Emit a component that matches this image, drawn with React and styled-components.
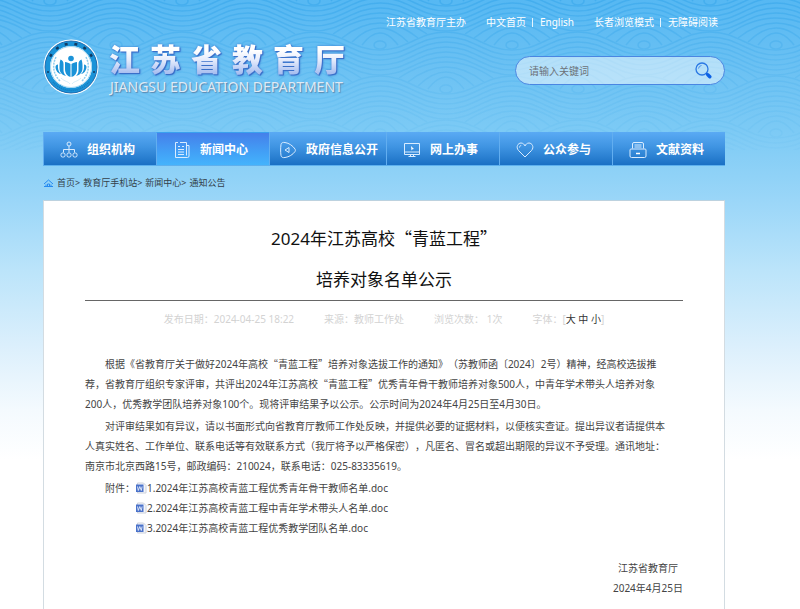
import React from "react";
import styled, { createGlobalStyle, css } from "styled-components";

const CJK = '"Noto Sans CJK SC", sans-serif';
const SANS = `"Noto Sans", ${CJK}`;

const GlobalStyle = createGlobalStyle`
  * { box-sizing: border-box; }
  body {
    margin: 0;
    background: #fff;
    color: #444;
    font: 10px/20px ${SANS};
    text-spacing-trim: space-all;
  }
  a { color: inherit; text-decoration: none; }
  p, h1, h2, ul, ol { margin: 0; padding: 0; list-style: none; }
`;

const Page = styled.div`
  position: relative;
  z-index: 0;
  display: flex;
  flex-direction: column;
  min-height: 100vh;
  padding: 0 75px 0 43px;
  background: linear-gradient(
    #56b8f3 0,
    #69c0f3 60px,
    #7ccaf5 130px,
    #9ad6f8 200px,
    #bbe4fa 270px,
    #dbeffc 345px,
    #f4fafe 410px,
    #fff 460px
  );
`;

const WaveArt = styled.svg`
  position: absolute;
  inset: 0 0 auto 0;
  z-index: -1;
  width: 100%;
  height: 150px;
`;

const TopBar = styled.nav`
  display: flex;
  justify-content: flex-end;
  gap: 20px;
  padding: 12px 7px 0 0;
  color: #fff;
`;

const LinkPair = styled.div`
  display: flex;
  align-items: center;
`;

const Divider = styled.span`
  width: 1px;
  height: 9px;
  margin: 0 7px 0 6px;
  background: #e4f4ff;
`;

const Header = styled.header`
  display: flex;
  justify-content: space-between;
  align-items: flex-start;
  height: 100px;
  padding-top: 7px;
`;

const Brand = styled.a`
  display: flex;
  gap: 10px;
`;

const SiteName = styled.h1`
  display: flex;
  gap: 10px;
  font: 900 31px/38px ${CJK};
  filter: drop-shadow(1px 1px 0 #3a6fc9) drop-shadow(0 0 1px #3a78cf);
`;

const Glyph = styled.span`
  width: 31px;
  color: transparent;
  background: linear-gradient(#fff 30%, #e6ecfc 55%, #a9bff0 90%);
  background-clip: text;
`;

const SiteNameEn = styled.p`
  padding-left: 1px;
  font: 14px/19px ${SANS};
  color: #dfeaf5;
  white-space: nowrap;
  text-shadow: 1px 1px 1px #5a86ac;
`;

const SearchBox = styled.form`
  display: flex;
  align-items: center;
  width: 210px;
  height: 29px;
  margin-top: 17px;
  padding: 0 12px 0 13px;
  border: 1px solid #4a86e2;
  border-radius: 15px;
  background: rgba(255, 255, 255, 0.5);
`;

const SearchInput = styled.input`
  flex: 1;
  min-width: 0;
  padding: 0;
  border: 0;
  outline: 0;
  background: none;
  color: #444;
  font: 10px/20px ${SANS};
  &::placeholder { color: #6c7278; opacity: 1; }
`;

const SearchButton = styled.button`
  display: flex;
  padding: 0;
  border: 0;
  background: none;
  cursor: pointer;
`;

const MainNav = styled.nav`
  display: grid;
  grid-template-columns: 113fr 113fr 117fr 113fr 113fr 113fr;
  height: 34px;
  border-bottom: 1px solid #5db0ee;
`;

const NavItem = styled.a`
  display: flex;
  align-items: center;
  gap: 9px;
  padding: 2px 0 0 ${(p) => (p.$wide ? 9 : 16)}px;
  border-left: 1px solid #62aef0;
  background: linear-gradient(#5aaaf4, #3f94e2 45%, #1a70c4);
  color: #fff;
  font-size: 12px;
  font-weight: 700;
  white-space: nowrap;
  ${(p) =>
    p.$active &&
    css`
      border-top: 1px solid #39a0f0;
      background: linear-gradient(#4580ea, #42a0f6 60%, #44b3fc);
    `}
`;

const Breadcrumb = styled.nav`
  display: flex;
  align-items: center;
  gap: 3px;
  height: 34px;
  color: #333f4a;
  font-size: 9px;
  white-space: nowrap;
`;

const Card = styled.main`
  flex: 1;
  padding: 16px 41px 10px;
  border: 1px solid #d3dce2;
  border-top-color: #bdd2df;
  border-bottom: 0;
  background: #fff;
`;

const Title = styled.h2`
  border-bottom: 1px solid #666;
  color: #111;
  font-size: 17px;
  font-weight: 400;
  line-height: 41px;
  text-align: center;
`;

const Meta = styled.div`
  display: flex;
  justify-content: center;
  gap: 30px;
  padding: 8px 0 25px;
  color: #d3d3d3;
  white-space: nowrap;
`;

const SizeButton = styled.button`
  padding: 0;
  border: 0;
  background: none;
  color: #333;
  font: inherit;
  cursor: pointer;
`;

const Paragraph = styled.p`
  margin-bottom: 2px;
  text-indent: 2em;
`;

const Attachments = styled.div`
  display: flex;
  padding-left: 20px;
`;

const FileLink = styled.a`
  display: flex;
  align-items: center;
`;

const Signature = styled.div`
  width: max-content;
  margin: 20px 0 0 auto;
  text-align: center;
`;

const QuoteMark = styled.span`
  font-family: ${CJK};
`;

const Cn = ({ children }) =>
  children
    .split(/([“”])/)
    .map((part, i) => (i % 2 ? <QuoteMark key={i}>{part}</QuoteMark> : part));

const wave = (px, py) => {
  let d = `M${px - 264} ${py}`;
  for (let x = px - 264; x < px + 264; x += 132) {
    d += `C${x + 28} ${py} ${x + 38} ${py + 18} ${x + 66} ${py + 18}`;
    d += `S${x + 104} ${py} ${x + 132} ${py}`;
  }
  return d;
};

const WaveRow = ({ x, y }) => (
  <>
    {[0, 5, 10, 15, 20, 25].map((dy) => (
      <path key={dy} d={wave(x, y + dy)} />
    ))}
    {[-132, 0, 132].map((dx) => (
      <g key={dx}>
        {[[47, 30, 46], [38, 35, 50], [28, 40, 54], [18, 45, 57]].map(([w, top, base]) => (
          <path
            key={w}
            d={`M${x + dx - w} ${y + base}Q${x + dx} ${y + 2 * top - base} ${x + dx + w} ${y + base}`}
          />
        ))}
        <ellipse cx={x + dx} cy={y + 57} rx="6" ry="4" />
      </g>
    ))}
  </>
);

const Waves = () => (
  <WaveArt aria-hidden="true">
    <defs>
      <pattern id="sea" width="132" height="88" patternUnits="userSpaceOnUse">
        <g fill="none" stroke="#249ce6" strokeWidth="1.5">
          <WaveRow x={50} y={-56} />
          <WaveRow x={116} y={-12} />
          <WaveRow x={50} y={32} />
          <WaveRow x={116} y={76} />
        </g>
      </pattern>
      <linearGradient id="fade" x2="0" y2="1">
        <stop offset="0" stopColor="#fff" stopOpacity=".36" />
        <stop offset=".4" stopColor="#fff" stopOpacity=".17" />
        <stop offset="1" stopColor="#fff" stopOpacity="0.04" />
      </linearGradient>
      <mask id="fadeMask">
        <rect width="100%" height="100%" fill="url(#fade)" />
      </mask>
    </defs>
    <rect width="100%" height="100%" fill="url(#sea)" mask="url(#fadeMask)" />
  </WaveArt>
);

const Emblem = () => (
  <svg width="56" height="56" viewBox="0 0 56 56" aria-hidden="true">
    <circle cx="28" cy="28" r="27.5" fill="#fff" />
    <circle cx="28" cy="28" r="23.5" fill="none" stroke="#1a93d8" strokeWidth="5" />
    <circle cx="28" cy="28" r="26" fill="none" stroke="#1f6cb0" strokeWidth="1" />
    <circle cx="28" cy="28" r="20.5" fill="none" stroke="#a4d8f2" strokeWidth="1" />
    <g fill="#123a60">
      {[-60, -36, -12, 12, 36, 60].map((a) => (
        <rect key={a} x="26.5" y="3.500" width="3" height="2.500" transform={`rotate(${a} 28 28)`} />
      ))}
      <circle cx="5" cy="33" r="1" />
      <circle cx="51" cy="33" r="1" />
    </g>
    <path d="M10 43a23.500 23.500 0 0 0 36 0" fill="none" stroke="#1478bb" strokeWidth="1.500" strokeDasharray="1 1" />
    <g fill="none" stroke="#8fcdee" strokeWidth="1.500" strokeDasharray="2 1">
      <path d="M13 18c-4 8-3 17 4 24" />
      <path d="M43 18c4 8 3 17-4 24" />
    </g>
    <g fill="#1b93d8">
      <circle cx="28" cy="19.500" r="2.800" />
      <path d="M27.500 25v13c-3.500-1-5.500-4-5.500-8v-7c2 0 4 1 5.500 2zM28.500 25v13c3.500-1 5.500-4 5.500-8v-7c-2 0-4 1-5.500 2z" />
      <path d="M17.500 20.500c2 1 3 2 3 4.500v6c0 2 .5 4 2.500 6-4-1-6.500-3.500-6.500-8 0-3 0-6 1-8.500zM38.500 20.500c-2 1-3 2-3 4.500v6c0 2-.5 4-2.500 6 4-1 6.500-3.500 6.500-8 0-3 0-6-1-8.500z" />
      <path d="M15 25.500c-.5 4 .5 7.500 3 9.500-3 0-5.500-4-5.500-7 0-1.500 1-2.500 2.500-2.500zM41 25.500c.5 4-.5 7.500-3 9.500 3 0 5.500-4 5.500-7 0-1.500-1-2.500-2.500-2.500z" />
    </g>
    <path d="M18 39c4 4 7 3 9 6M38 39c-4 4-7 3-9 6" fill="none" stroke="#d4edf9" strokeWidth="1" />
  </svg>
);

const Magnifier = () => (
  <svg width="17" height="17" viewBox="0 0 17 17" fill="none" aria-hidden="true">
    <circle cx="7" cy="7" r="6" stroke="#2a78e4" strokeWidth="1.3" />
    <path d="M3.500 6.500a3.500 3.500 0 0 1 3-3" stroke="#4b91ea" />
    <path d="M11.300 11.300l1.300 1.300" stroke="#1768dc" strokeWidth="1.5" />
    <path d="M12.800 12.800l2 2" stroke="#0a60e6" strokeWidth="3.400" strokeLinecap="round" />
  </svg>
);

const NavSvg = styled.svg`
  flex: none;
  width: 18px;
  height: 18px;
  fill: none;
  stroke: #d9ecff;
  stroke-width: 1;
`;

const icons = {
  org: (
    <>
      <circle cx="9" cy="3" r="2" />
      <path d="M9 5v6.500M3.500 11.500v-3h11v3" />
      <rect x="1" y="12" width="4" height="4" rx="1.500" />
      <rect x="7" y="12" width="4" height="4" rx="1.500" />
      <rect x="13" y="12" width="4" height="4" rx="1.500" />
    </>
  ),
  news: (
    <>
      <path d="M5 1.500H2.500v15h12a1.500 1.500 0 0 0 1.500-1.500V4.500h-2.500M7 1.500h6.500v13" />
      <path d="M5 5.500h2M5 8.500h6M5 11h6M5 13.500h6M9 5.500h2" />
    </>
  ),
  info: (
    <>
      <path d="M2 3.500C2 2 4 1 6 1.500c4 .5 8 3.500 10 6.500.5 1 .5 1.500 0 2.500-2 3-6 5.500-10 6-2 .5-4-.5-4-2C1.500 11 1.500 7 2 3.500z" />
      <path d="M10 6.500v5L6 9z" />
    </>
  ),
  online: (
    <>
      <path d="M1.500 2.500h15v11h-15zM1.500 11h15M7.500 13.500v2M10.500 13.500v2M5.500 15.500h7" />
      <path d="M8 5l3 3-1.500.2-1 1.300z" fill="#fff" stroke="none" />
    </>
  ),
  heart: (
    <>
      <path d="M9 16L2.500 9.500C-.5 6 2 2 5 2c2 0 3.500 1.500 4 3 .5-1.500 2-3 4-3 3 0 5.500 4 2.500 7.500z" />
      <path d="M3.500 6.500c0-1 .7-2 1.700-2" />
    </>
  ),
  files: (
    <>
      <path d="M3.500 7.500V3a1.500 1.500 0 0 1 1.500-1.500h8A1.500 1.500 0 0 1 14.500 3v4.500" />
      <path d="M5.500 4h7M5.500 6h7M2 8h14a1 1 0 0 1 1 1v6a1.500 1.500 0 0 1-1.500 1.500h-13A1.500 1.500 0 0 1 1 15V9a1 1 0 0 1 1-1z" />
      <path d="M7 12.500h4" stroke="#fff" strokeWidth="1.500" />
    </>
  ),
};

const HouseIcon = () => (
  <svg width="11" height="10" viewBox="0 0 11 10" fill="none" stroke="#268af0" aria-hidden="true">
    <path d="M1 6l4.500-4L10 6M3 6.500V8M8 6.500V8M4.500 8V6h2v2M1 8.500h9" />
  </svg>
);

const DocIcon = () => (
  <svg width="12" height="12" viewBox="0 0 12 12" aria-hidden="true">
    <path d="M2.500 1h6L11 3.500V11H2.500z" fill="#f4f6fa" stroke="#cdd1db" />
    <rect x="1" y="2.500" width="7.500" height="7.500" fill="#4a72ca" />
    <path d="M2.500 4.500l.8 4 1.500-4 1.500 4 .8-4" fill="none" stroke="#e6edfa" strokeWidth=".9" />
  </svg>
);

const navItems = [
  { icon: "org", label: "组织机构" },
  { icon: "news", label: "新闻中心", active: true },
  { icon: "info", label: "政府信息公开", wide: true },
  { icon: "online", label: "网上办事" },
  { icon: "heart", label: "公众参与" },
  { icon: "files", label: "文献资料" },
];

const crumbs = ["首页", "教育厅手机站", "新闻中心", "通知公告"];

const files = [
  "1.2024年江苏高校青蓝工程优秀青年骨干教师名单.doc",
  "2.2024年江苏高校青蓝工程中青年学术带头人名单.doc",
  "3.2024年江苏高校青蓝工程优秀教学团队名单.doc",
];

const paragraphs = [
  [
    "根据《省教育厅关于做好2024年高校“青蓝工程”培养对象选拔工作的通知》（苏教师函〔2024〕2号）精神，经高校选拔推",
    "荐，省教育厅组织专家评审，共评出2024年江苏高校“青蓝工程”优秀青年骨干教师培养对象500人，中青年学术带头人培养对象",
    "200人，优秀教学团队培养对象100个。现将评审结果予以公示。公示时间为2024年4月25日至4月30日。",
  ],
  [
    "对评审结果如有异议，请以书面形式向省教育厅教师工作处反映，并提供必要的证据材料，以便核实查证。提出异议者请提供本",
    "人真实姓名、工作单位、联系电话等有效联系方式（我厅将予以严格保密），凡匿名、冒名或超出期限的异议不予受理。通讯地址：",
    "南京市北京西路15号，邮政编码：210024，联系电话：025-83335619。",
  ],
];

export default function App() {
  return (
    <Page>
      <GlobalStyle />
      <Waves />
      <TopBar aria-label="网站链接">
        <span>江苏省教育厅主办</span>
        <LinkPair>
          <a href="#cn">中文首页</a>
          <Divider />
          <a href="#en">English</a>
        </LinkPair>
        <LinkPair>
          <a href="#elder">长者浏览模式</a>
          <Divider />
          <a href="#access">无障碍阅读</a>
        </LinkPair>
      </TopBar>

      <Header>
        <Brand href="#home">
          <Emblem />
          <div>
            <SiteName aria-label="江苏省教育厅">
              {[..."江苏省教育厅"].map((c) => (
                <Glyph key={c}>{c}</Glyph>
              ))}
            </SiteName>
            <SiteNameEn>JIANGSU EDUCATION DEPARTMENT</SiteNameEn>
          </div>
        </Brand>
        <SearchBox role="search" onSubmit={(e) => e.preventDefault()}>
          <SearchInput type="text" placeholder="请输入关键词" aria-label="请输入关键词" />
          <SearchButton type="submit" aria-label="搜索">
            <Magnifier />
          </SearchButton>
        </SearchBox>
      </Header>

      <MainNav aria-label="主导航">
        {navItems.map(({ icon, label, active, wide }) => (
          <NavItem key={icon} href={`#${icon}`} $active={active} $wide={wide}>
            <NavSvg viewBox="0 0 18 18" aria-hidden="true">
              {icons[icon]}
            </NavSvg>
            {label}
          </NavItem>
        ))}
      </MainNav>

      <Breadcrumb aria-label="当前位置">
        <HouseIcon />
        {crumbs.map((c, i) => (
          <span key={c}>
            <a href={`#crumb${i}`}>{c}</a>
            {i < crumbs.length - 1 && ">"}
          </span>
        ))}
      </Breadcrumb>

      <Card>
        <Title>
          <Cn>2024年江苏高校“青蓝工程”</Cn>
          <br />
          培养对象名单公示
        </Title>
        <Meta>
          <span>发布日期：2024-04-25 18:22</span>
          <span>来源：教师工作处</span>
          <span>浏览次数： 1次</span>
          <span>
            字体：[<SizeButton type="button">大</SizeButton>{" "}
            <SizeButton type="button">中</SizeButton>{" "}
            <SizeButton type="button">小</SizeButton>]
          </span>
        </Meta>
        {paragraphs.map((lines) => (
          <Paragraph key={lines[0]}>
            {lines.map((line, i) => (
              <React.Fragment key={line}>
                {i > 0 && <br />}
                <Cn>{line}</Cn>
              </React.Fragment>
            ))}
          </Paragraph>
        ))}
        <Attachments>
          <span>附件：</span>
          <ul>
            {files.map((f) => (
              <li key={f}>
                <FileLink href="#doc">
                  <DocIcon />
                  {f}
                </FileLink>
              </li>
            ))}
          </ul>
        </Attachments>
        <Signature>
          <p>江苏省教育厅</p>
          <p>2024年4月25日</p>
        </Signature>
      </Card>
    </Page>
  );
}
